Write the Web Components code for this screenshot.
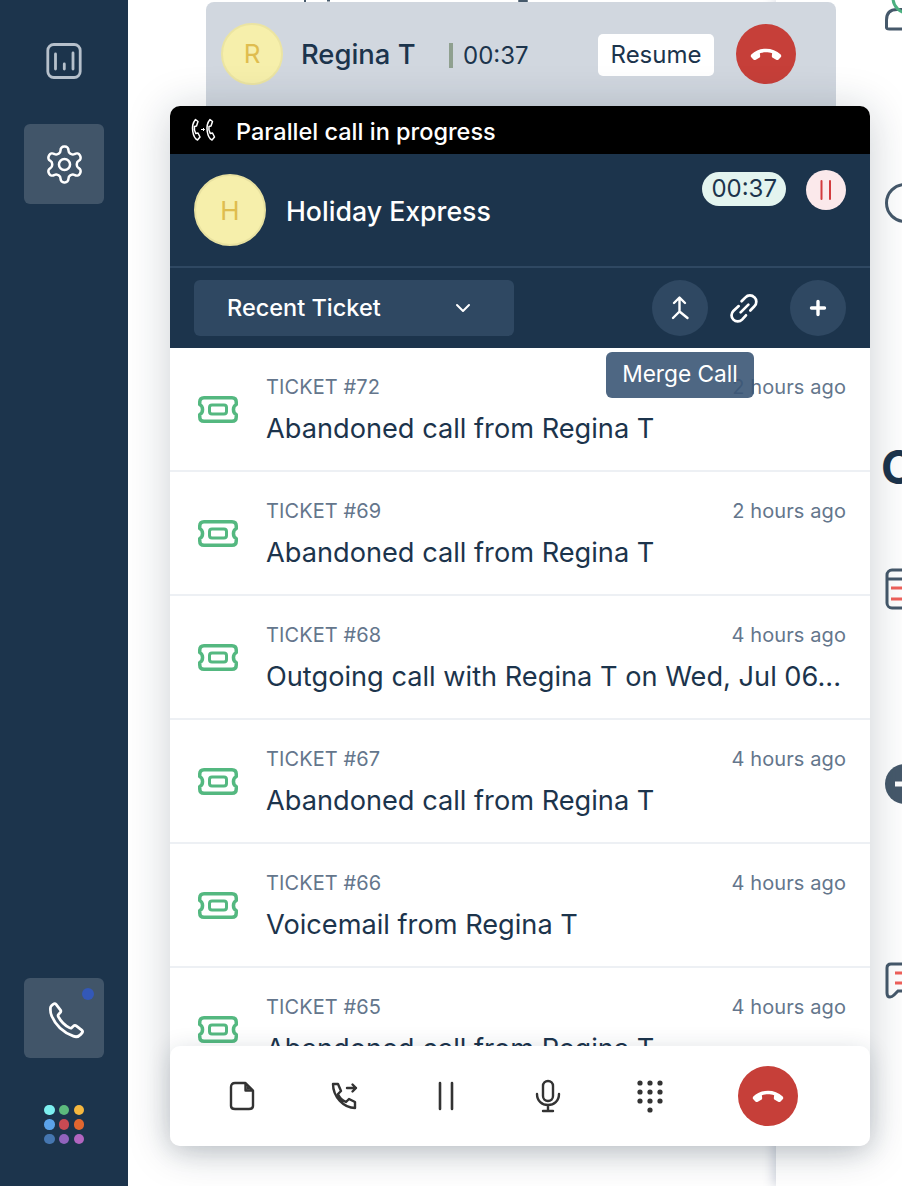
<!DOCTYPE html>
<html><head><meta charset="utf-8">
<style>
html,body{margin:0;padding:0;height:1186px;overflow:hidden;background:#fff;font-family:Inter,"Liberation Sans",sans-serif;}
</style></head><body>
<call-app>
  <side-bar slot="side"></side-bar>
  <side-pane slot="pane"></side-pane>
  <held-call slot="held" name="Regina T" initial="R" time="00:37"></held-call>
  <call-card slot="card">
    <ticket-row num="72" ago="2 hours ago" title="Abandoned call from Regina T"></ticket-row>
    <ticket-row num="69" ago="2 hours ago" title="Abandoned call from Regina T"></ticket-row>
    <ticket-row num="68" ago="4 hours ago" title="Outgoing call with Regina T on Wed, Jul 06..."></ticket-row>
    <ticket-row num="67" ago="4 hours ago" title="Abandoned call from Regina T"></ticket-row>
    <ticket-row num="66" ago="4 hours ago" title="Voicemail from Regina T"></ticket-row>
    <ticket-row num="65" ago="4 hours ago" title="Abandoned call from Regina T"></ticket-row>
  </call-card>
</call-app>
<script>
const HANGUP='<path d="M2.200 14.200c-.5-.5-.5-1.300 0-1.800C4.900 9.800 8.300 8.500 12 8.500s7.100 1.300 9.800 3.900c.5.500.5 1.300 0 1.800l-1.400 1.400c-.4.400-1.100.500-1.600.2l-2.300-1.300c-.5-.3-.7-.8-.6-1.300l.2-1.700c-1.400-.5-2.700-.6-4.100-.6s-2.700.1-4.100.6l.2 1.700c.1.500-.1 1-.6 1.300l-2.300 1.300c-.5.300-1.200.2-1.600-.2z" fill="#fff"/>';
function def(name,html){customElements.define(name,class extends HTMLElement{constructor(){super();this.attachShadow({mode:'open'});}
 connectedCallback(){this.shadowRoot.innerHTML=typeof html==='function'?html(this):html;}});}

def('call-app',`<style>
:host{display:flex;width:902px;height:1186px;position:relative;overflow:hidden;background:#fff}
.side{flex:0 0 128px;position:relative;z-index:2}
.pane{flex:1;display:flex;justify-content:flex-end;min-width:0}
.marks{position:absolute;left:300px;top:0}
::slotted([slot=held]){position:absolute;left:206px;top:2px}
::slotted([slot=card]){position:absolute;left:170px;top:106px}
</style>
<div class="side"><slot name="side"></slot></div>
<div class="pane"><slot name="pane"></slot></div>
<svg class="marks" width="240" height="2" fill="#46596b"><rect x="4" width="2" height="2"/><rect x="27" width="3" height="1.500"/><rect x="218" width="10" height="2" rx="1"/></svg>
<slot name="held"></slot><slot name="card"></slot>`);

def('side-bar',`<style>
:host{display:flex;flex-direction:column;align-items:center;height:1186px;width:128px;background:#1c344c;box-sizing:border-box;padding:41px 0 0}
.top{display:flex;flex-direction:column;align-items:center;gap:43px}
.b{width:80px;height:80px;display:flex;align-items:center;justify-content:center;border-radius:6px;position:relative}
.plain{height:40px;width:40px}
.on{background:#415569}
.dot{position:absolute;width:12px;height:12px;border-radius:50%;background:#3358b8;right:10px;top:10px}
.sp{flex:1}
.grid{display:grid;grid-template-columns:repeat(3,10px);grid-auto-rows:10px;gap:4.700px;margin:47px 0 42px}
.grid i{display:block;width:10.400px;height:10.400px;border-radius:50%}
</style>
<div class="top">
<div class="b plain"><svg width="38" height="38" viewBox="0 0 38 38" fill="none" stroke="#b6c0cb" stroke-width="2.800" stroke-linecap="round"><rect x="2.800" y="2.500" width="32.400" height="33" rx="6"/><path d="M10.500 12v15M19.300 22v5M28 11v16"/></svg></div>
<div class="b on"><svg width="43" height="43" viewBox="0 0 24 24" fill="none" stroke="#fff" stroke-width="1.400" stroke-linecap="round" stroke-linejoin="round"><path d="M12.220 2h-.44a2 2 0 0 0-2 2v.18a2 2 0 0 1-1 1.730l-.43.250a2 2 0 0 1-2 0l-.15-.08a2 2 0 0 0-2.730.730l-.22.380a2 2 0 0 0 .730 2.730l.15.1a2 2 0 0 1 1 1.720v.510a2 2 0 0 1-1 1.740l-.15.09a2 2 0 0 0-.730 2.730l.22.380a2 2 0 0 0 2.730.730l.15-.08a2 2 0 0 1 2 0l.43.250a2 2 0 0 1 1 1.730V20a2 2 0 0 0 2 2h.44a2 2 0 0 0 2-2v-.18a2 2 0 0 1 1-1.730l.43-.25a2 2 0 0 1 2 0l.15.08a2 2 0 0 0 2.730-.730l.22-.39a2 2 0 0 0-.730-2.730l-.15-.08a2 2 0 0 1-1-1.740v-.5a2 2 0 0 1 1-1.740l.15-.09a2 2 0 0 0 .730-2.730l-.22-.38a2 2 0 0 0-2.730-.730l-.15.08a2 2 0 0 1-2 0l-.43-.25a2 2 0 0 1-1-1.730V4a2 2 0 0 0-2-2z"/><circle cx="12" cy="12" r="3.100"/></svg></div>
</div>
<div class="sp"></div>
<div class="b on"><span class="dot"></span><svg width="44" height="44" viewBox="0 0 24 24" fill="none" stroke="#fff" stroke-width="1.500" stroke-linecap="round" stroke-linejoin="round" style="margin-left:4px;margin-top:4px"><path d="M3.500 5.500c0-.6.3-1 .7-1.400l.8-.7c.5-.4 1.200-.4 1.600.1l2.300 3c.4.500.3 1.100-.1 1.500l-.9 1c-.3.300-.3.700-.1 1.100 1.500 2.900 3.300 4.700 6.200 6.200.4.200.8.200 1.100-.1l1-.9c.4-.4 1-.5 1.500-.1l3 2.300c.5.400.5 1.100.1 1.600l-.7.800c-1 1.100-2.600 1.500-4 .9-6.100-2.200-9.700-6-11.800-11-.5-1.200-.7-2.500-.7-3.300z"/></svg></div>
<div class="grid">
<i style="background:#7deff0"></i><i style="background:#5cba7d"></i><i style="background:#f5b73f"></i>
<i style="background:#5ba3ea"></i><i style="background:#c94a53"></i><i style="background:#e0662f"></i>
<i style="background:#4576b0"></i><i style="background:#9163bd"></i><i style="background:#b265c0"></i>
</div>`);

def('side-pane',`<style>
:host{display:block;width:126px;height:1186px;box-sizing:border-box;background:#fff;box-shadow:-3px 0 10px rgba(50,70,110,.22);padding-left:105px;color:#1c344c;position:relative}
.w{overflow:hidden;width:21px;height:1186px;display:flex;flex-direction:column;padding-left:4px;box-sizing:border-box}
.i{display:block;flex:none}
.c{margin:219px 0 0 -4px;font:700 46px/50px Inter,sans-serif;height:50px;flex:none}
</style><div class="w">
<svg class="i" style="margin-top:-6px" width="40" height="38" viewBox="0 0 40 38" fill="none" stroke-width="3"><path d="M40 15.500H12Q1.500 15.500 1.500 26v7.500q0 1.500 3 1.500H40" stroke="#46596b"/><circle cx="23" cy="4" r="15" stroke="#4cb080"/></svg>
<svg class="i" style="margin-top:151px" width="40" height="40" viewBox="0 0 40 40" fill="none" stroke="#46596b" stroke-width="3"><circle cx="20" cy="20" r="18.500"/></svg>
<div class="c">C</div>
<svg class="i" style="margin-top:76px" width="40" height="42" viewBox="0 0 40 42" fill="none"><rect x="2" y="2" width="38" height="38" rx="5" stroke="#46596b" stroke-width="3"/><path d="M2 11h30" stroke="#46596b" stroke-width="3"/><path d="M6 20h30M6 31h30" stroke="#f0605a" stroke-width="3"/></svg>
<svg class="i" style="margin-top:154px" width="40" height="40" viewBox="0 0 40 40"><circle cx="20" cy="20" r="20" fill="#46596b"/><rect x="10" y="17.500" width="24" height="5" fill="#fff"/></svg>
<svg class="i" style="margin-top:158px" width="40" height="38" viewBox="0 0 40 38" fill="none"><path d="M40 2H6Q2 2 2 6v25q0 4 3 4 2 0 4-2l4-4h27" stroke="#46596b" stroke-width="3"/><path d="M10 11h30M10 21h30" stroke="#f0605a" stroke-width="3"/></svg>
</div>`);

def('held-call',h=>`<style>
:host{display:flex;align-items:flex-start;width:630px;height:118px;box-sizing:border-box;background:#d1d7df;border-radius:8px;padding:21px 40px 0 15px;color:#1c344c}
.av{width:62px;height:62px;box-sizing:border-box;border-radius:50%;background:#f6efab;border:2px solid #ebe4a2;color:#dfbd4f;font:400 26px/58px Inter,sans-serif;text-align:center;flex:none}
.n{font:500 27.400px/62px Inter,sans-serif;margin-left:18px;white-space:nowrap;width:148px;flex:none}
.bar{width:4px;height:25px;background:#8fa08f;margin:20px 10px 0 0;flex:none}
.t{font:400 24px/66px Inter,sans-serif;flex:1}
.r{font:400 24px/42px Inter,sans-serif;background:#fff;border-radius:5px;padding:0 12.500px;margin:11px 22px 0 0;height:42px;flex:none}
.h{width:60px;height:60px;border-radius:50%;background:#c63f39;display:flex;align-items:center;justify-content:center;margin-top:1px;flex:none}
</style>
<div class="av">${h.getAttribute('initial')}</div><div class="n">${h.getAttribute('name')}</div><div class="bar"></div><div class="t">${h.getAttribute('time')}</div><div class="r">Resume</div><div class="h"><svg width="36" height="36" viewBox="0 0 24 24">${HANGUP}</svg></div>`);

def('call-card',`<style>
:host{display:flex;flex-direction:column;width:700px;height:1040px;position:relative;background:#fff;border-radius:10px;box-shadow:0 4px 44px rgba(20,35,55,.22)}
.banner{height:48px;background:#000;color:#fff;border-radius:10px 10px 0 0;display:flex;align-items:center;padding-left:20px;gap:18px;font:500 23.500px/30px Inter,sans-serif;flex:none}
.banner span{padding-top:4px}
.head{background:#1c344c;color:#fff;border-bottom:2px solid #2f4862;display:flex;padding:20px 24px 0;height:92px;flex:none}
.av{width:72px;height:72px;box-sizing:border-box;border-radius:50%;background:#f6efab;border:2px solid #e8e1a0;color:#dfbd4f;font:400 26px/69px Inter,sans-serif;text-align:center;flex:none}
.name{font:500 26.700px/74px Inter,sans-serif;margin-left:20px;flex:1}
.time{height:34px;background:#e3f4ef;color:#1c344c;border-radius:17px;font:400 24px/34px Inter,sans-serif;padding:0 9px;margin:-2px 20px 0 0}
.pause{width:40px;height:40px;border-radius:50%;background:#fbe9eb;display:flex;align-items:center;justify-content:center;margin-top:-4px}
.tools{height:80px;background:#1c344c;display:flex;padding:12px 24px 0;box-sizing:border-box;flex:none;align-items:flex-start}
.sel{width:320px;height:56px;border-radius:6px;background:#2f4862;color:#fff;font:500 23.500px/56px Inter,sans-serif;box-sizing:border-box;padding:0 43px 0 33px;display:flex;justify-content:space-between;align-items:center;margin-right:138px}
.c{width:56px;height:56px;border-radius:50%;display:flex;align-items:center;justify-content:center;flex:none}
.f{background:#2f4862}
.list{flex:1;overflow:hidden;min-height:0}
.foot{position:absolute;left:0;right:0;bottom:0;height:100px;background:#fff;border-radius:10px;box-shadow:0 4px 24px rgba(20,35,55,.16);display:grid;grid-template-columns:repeat(5,102px) 134px;align-items:center;justify-items:center;padding:0 0 0 21px;box-sizing:border-box}
.foot svg{display:block}
.end{width:60px;height:60px;border-radius:50%;background:#c63f39;display:flex;align-items:center;justify-content:center}
.tip{position:absolute;left:436px;top:246px;width:148px;height:46px;box-sizing:border-box;border-radius:6px;background:rgba(59,87,117,.9);color:#fff;font:400 22.700px/44px Inter,sans-serif;text-align:center;white-space:nowrap}
</style>
<div class="banner"><svg width="28" height="24" viewBox="0 0 28 24" fill="none" stroke="#fff" stroke-width="1.500" stroke-linejoin="round"><path d="M5.500 1.500 8 3.500 6.500 8l-2 .5c-.5 2.500 0 5 1.300 7l2.200-.5 2 4-2.500 3C3 20 0 8 5.500 1.500z"/><path d="M20 1.500 22.500 3.500 21 8l-2 .5c-.5 2.500 0 5 1.300 7l2.200-.5 2 4-2.500 3C17.500 20 14.500 8 20 1.500z"/><path d="M11 11.500h3.500M13 10l1.500 1.500L13 13" stroke-width="1"/></svg><span>Parallel call in progress</span></div>
<div class="head"><div class="av">H</div><div class="name">Holiday Express</div><div class="time">00:37</div><div class="pause"><svg width="16" height="22" viewBox="0 0 16 22" stroke="#d33b3e" stroke-width="2" stroke-linecap="round"><path d="M3.500 2v18M12 2v18"/></svg></div></div>
<div class="tools"><div class="sel"><span>Recent Ticket</span><svg width="16" height="10" viewBox="0 0 16 10" fill="none" stroke="#fff" stroke-width="2" stroke-linecap="round" stroke-linejoin="round"><path d="M2 2l6 6 6-6"/></svg></div>
<div class="c f"><svg width="24" height="28" viewBox="0 0 24 28" fill="none" stroke="#fff" stroke-width="2.400" stroke-linecap="round" stroke-linejoin="round"><path d="M11.500 4v14M6 9l5.500-5.500L17 9M11.500 17.500 5 24M11.500 17.500 19.500 24"/></svg></div>
<div class="c" style="margin:0 18px 0 8px"><svg width="31" height="31" viewBox="0 0 32 32" fill="none" stroke="#fff" stroke-width="2.800" stroke-linecap="round"><path d="M13 8.500l4-4a6.300 6.300 0 0 1 9.200 0 6.300 6.300 0 0 1 0 9.200L22 18"/><path d="M10 13.500l-5.500 5a6.300 6.300 0 0 0 0 9 6.300 6.300 0 0 0 9 0l4-4.500"/><path d="M12 20l8-8"/></svg></div>
<div class="c f"><svg width="18" height="18" viewBox="0 0 18 18" stroke="#fff" stroke-width="3.400" stroke-linecap="round"><path d="M9 2.500v13M2.500 9h13"/></svg></div></div>
<div class="list"><slot></slot></div>
<div class="foot">
<svg width="26" height="30" viewBox="0 0 26 30" fill="none" stroke="#333" stroke-width="2.400" stroke-linejoin="round"><path d="M16.500 2H6Q2 2 2 6v19q0 3 4 3h14q4 0 4-3V9.500zM16.500 2v7.500H24" /><path d="M17.500 4v4.500H22z" fill="#333" stroke="none"/></svg>
<svg width="28" height="30" viewBox="0 0 28 30" fill="none" stroke="#333" stroke-width="2.400" stroke-linejoin="round" stroke-linecap="round"><path d="M3 3h5l3 7-3 3c1.500 4 4 6.500 8 8l3-3 6 3v6C14 27 3 16 3 3z"/><path d="M17 7h9M22.500 3.500 26 7l-3.500 3.500"/></svg>
<svg width="20" height="30" viewBox="0 0 20 30" stroke="#333" stroke-width="2.600" stroke-linecap="round"><path d="M4 2v26M16 2v26"/></svg>
<svg width="26" height="34" viewBox="0 0 26 34" fill="none" stroke="#333" stroke-width="2.400" stroke-linecap="round"><rect x="8" y="2" width="10" height="20" rx="5"/><path d="M2 15c0 7 5 11 11 11s11-4 11-11M13 26v5M8 32h10"/></svg>
<svg width="26" height="34" viewBox="0 0 26 34" fill="#333"><circle cx="3" cy="4" r="2.600"/><circle cx="13" cy="4" r="2.600"/><circle cx="23" cy="4" r="2.600"/><circle cx="3" cy="13" r="2.600"/><circle cx="13" cy="13" r="2.600"/><circle cx="23" cy="13" r="2.600"/><circle cx="3" cy="22" r="2.600"/><circle cx="13" cy="22" r="2.600"/><circle cx="23" cy="22" r="2.600"/><circle cx="13" cy="31" r="2.600"/></svg>
<div class="end"><svg width="36" height="36" viewBox="0 0 24 24">${HANGUP}</svg></div>
</div>
<div class="tip">Merge Call</div>`);

def('ticket-row',h=>`<style>
:host{display:block;height:124px;box-sizing:border-box;border-bottom:2px solid #edf0f4;padding:0 24px 0 26px;color:#1c344c}
.r{display:flex;height:122px;align-items:flex-start}
.ic{margin:46px 26px 0 0;flex:none;display:block}
.m{flex:1;min-width:0;padding-top:24px}
.t{display:flex;justify-content:space-between;font:400 20px/30px Inter,sans-serif;color:#64768c;letter-spacing:.1px}
.s{font:400 27.200px/36px Inter,sans-serif;margin-top:9px;white-space:nowrap;overflow:hidden}
</style>
<div class="r"><svg class="ic" width="44" height="30" viewBox="0 0 44 30" fill="none" stroke="#54b880" stroke-width="3.500" stroke-linejoin="round"><path d="M8 3.750h28q4.250 0 4.250 4.250v2.500q-2.800 1.500-2.800 5t2.800 5V23q0 4.250-4.250 4.250H8Q3.750 27.250 3.750 23v-2.500q2.800-1.500 2.800-5t-2.800-5V8Q3.750 3.750 8 3.750z"/><rect x="13.500" y="11" width="17" height="9" rx="2.500" stroke-width="3"/></svg>
<div class="m"><div class="t"><span>TICKET #${h.getAttribute('num')}</span><span>${h.getAttribute('ago')}</span></div><div class="s">${h.getAttribute('title')}</div></div></div>`);
</script>
</body></html>
